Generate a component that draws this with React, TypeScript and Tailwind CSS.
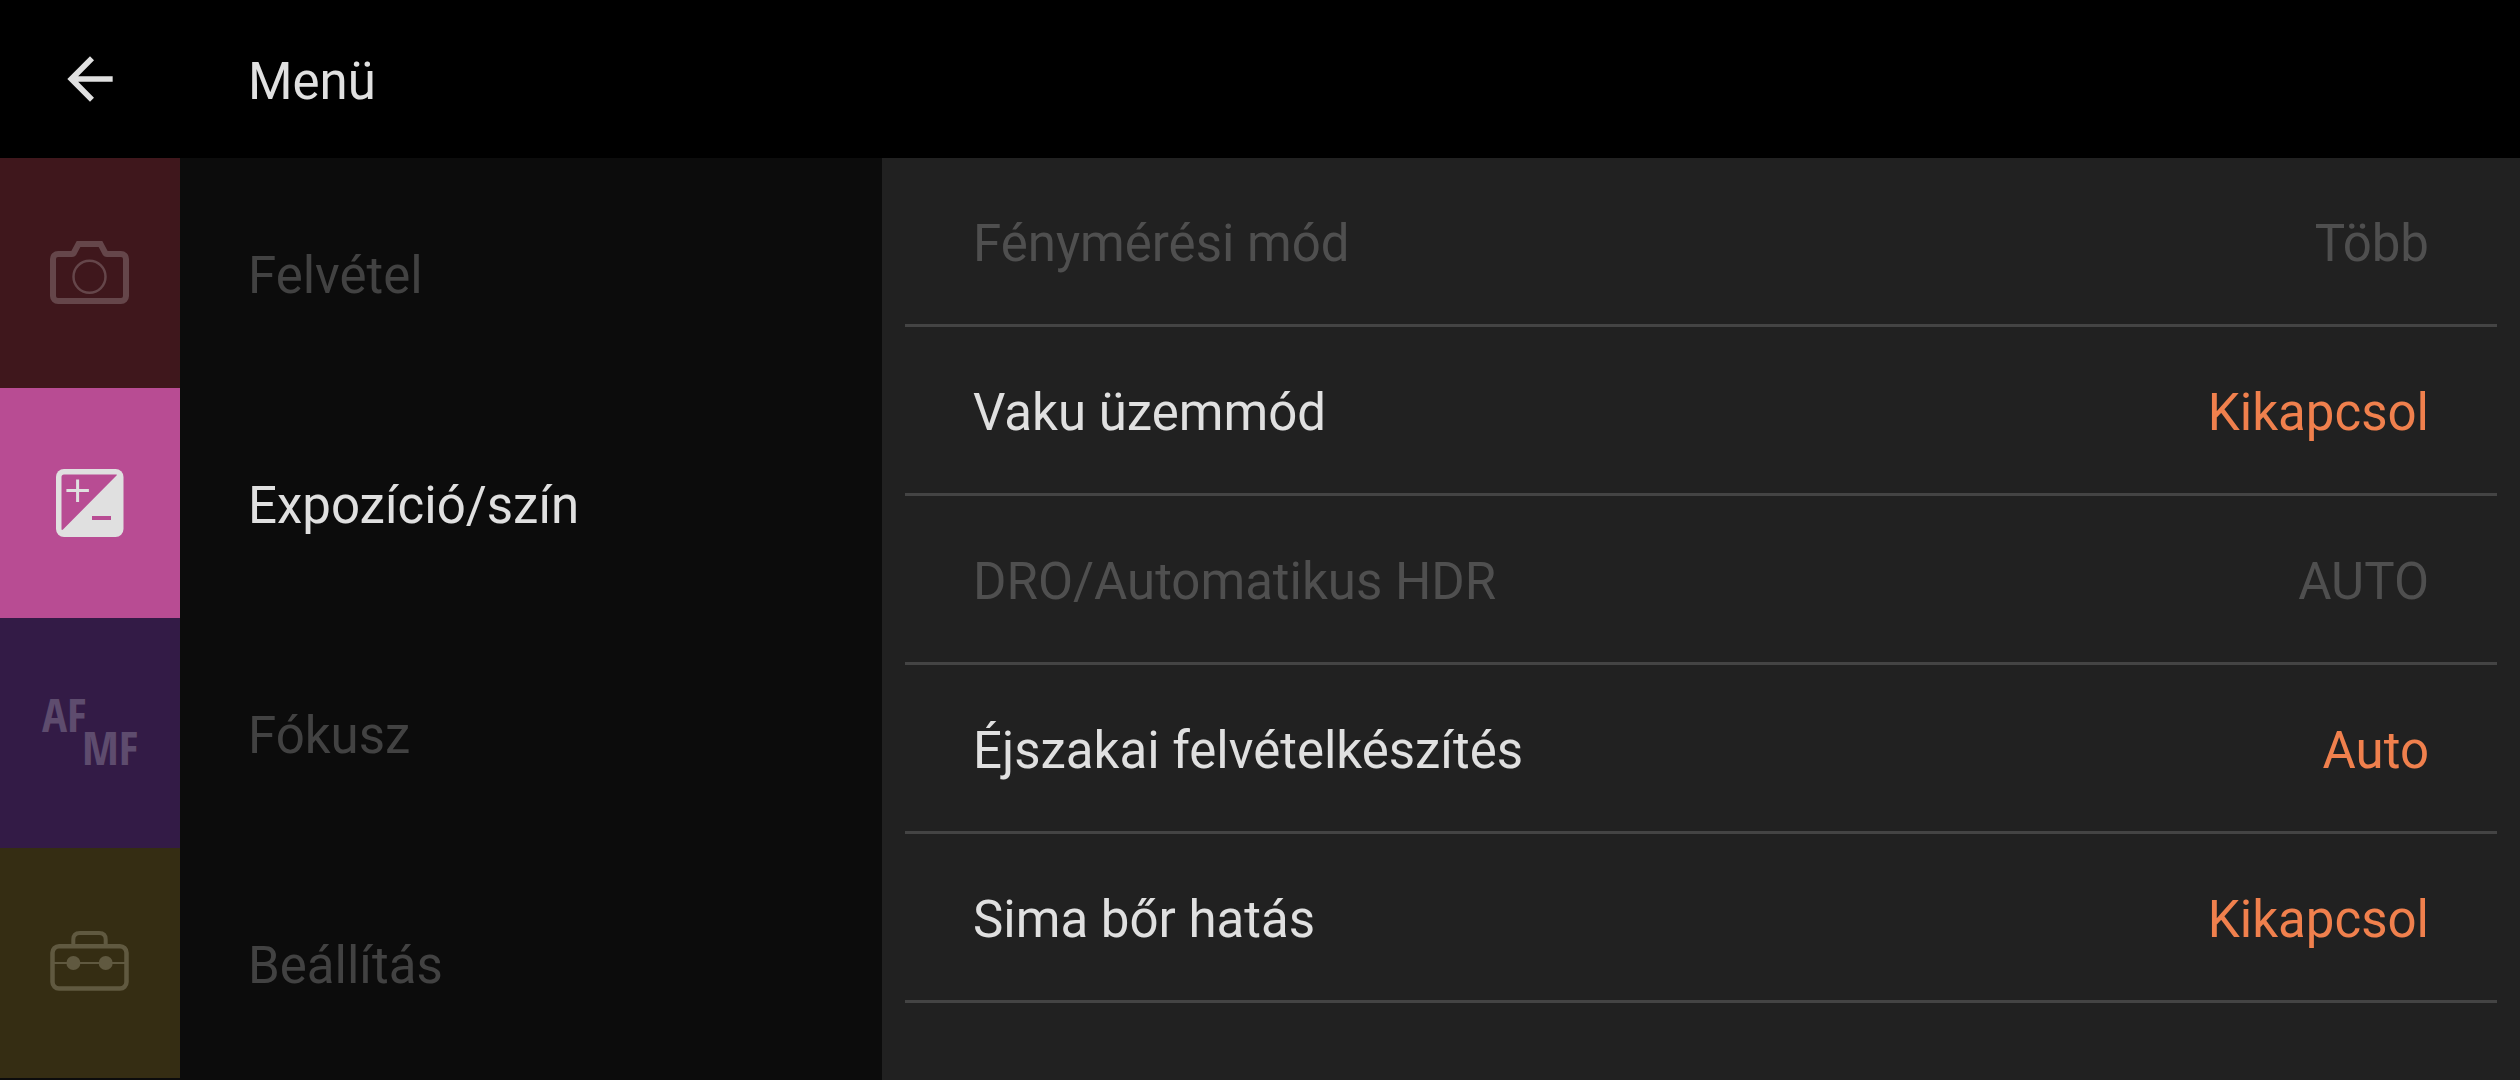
import React from "react";

function CameraIcon() {
  return (
    <svg width="80" height="64" viewBox="0 0 80 64" fill="none" stroke="#65464a" strokeWidth="6" aria-hidden="true">
      <path d="M8 13h14q1.5 0 2-1.5L28.500 3h22L55 11.500q.5 1.500 2 1.500h14a5 5 0 0 1 5 5v37a5 5 0 0 1-5 5H8a5 5 0 0 1-5-5V18a5 5 0 0 1 5-5z" />
      <circle cx="39.5" cy="35.7" r="16" strokeWidth="2.5" />
    </svg>
  );
}

function ExposureIcon() {
  return (
    <svg width="68" height="68" viewBox="0 0 68 68" aria-hidden="true">
      <rect width="67.5" height="68" rx="8" fill="#e0e0e0" />
      <path d="M8 5.5h52.500q.8.300 0 1L7 60.500q-1 .8-1.500 0V8q0-2.500 2.500-2.500z" fill="#b84c93" />
      <path d="M21.600 10.500v22.500M10.400 21.500h22.500" stroke="#e0e0e0" strokeWidth="3" />
      <path d="M36 49h19" stroke="#b84c93" strokeWidth="4" />
    </svg>
  );
}

function FocusIcon() {
  return (
    <span aria-hidden="true" className="flex w-24 flex-col pb-1 font-['Liberation_Sans_Narrow','Open_Sans_Condensed','Roboto_Condensed','Roboto',sans-serif] text-[47px] leading-[33px] font-bold text-[#5e4c6e]">
      <span>AF</span>
      <span className="self-end">MF</span>
    </span>
  );
}

function ToolboxIcon() {
  return (
    <svg width="80" height="64" viewBox="0 0 80 64" fill="none" stroke="#605940" strokeWidth="4.5" aria-hidden="true">
      <rect x="2.5" y="15.2" width="74" height="42.3" rx="6.5" />
      <path d="M23.300 14V8.500q0-6.500 6.500-6.500h19.400q6.500 0 6.500 6.500V14" strokeWidth="4" />
      <path d="M3 32h73" strokeWidth="2" />
      <circle cx="23.4" cy="32" r="7" fill="#605940" stroke="none" />
      <circle cx="55.7" cy="32" r="7" fill="#605940" stroke="none" />
    </svg>
  );
}

const categories = [
  { label: "Felvétel", icon: CameraIcon, color: "bg-[#3f171c]" },
  { label: "Expozíció/szín", icon: ExposureIcon, color: "bg-[#b84c93]", active: true },
  { label: "Fókusz", icon: FocusIcon, color: "bg-[#331b46]" },
  { label: "Beállítás", icon: ToolboxIcon, color: "bg-[#352d13]" },
];

const settings = [
  { label: "Fénymérési mód", value: "Több", disabled: true },
  { label: "Vaku üzemmód", value: "Kikapcsol" },
  { label: "DRO/Automatikus HDR", value: "AUTO", disabled: true },
  { label: "Éjszakai felvételkészítés", value: "Auto" },
  { label: "Sima bőr hatás", value: "Kikapcsol" },
];

export default function App() {
  return (
    <div className="flex h-screen flex-col overflow-hidden bg-black font-[Roboto,sans-serif] text-[51px] leading-[60px] text-[#e0e0e0]">
      <header className="flex h-[158px] shrink-0 items-center">
        <button aria-label="Vissza" className="flex w-[180px] shrink-0 justify-center">
          <svg width="68" height="68" viewBox="0 0 24 24" fill="#e0e0e0" aria-hidden="true">
            <path d="M20 11H7.83l5.59-5.59L12 4l-8 8 8 8 1.41-1.41L7.83 13H20z" />
          </svg>
        </button>
        <h1 className="pt-1.5 pl-[68px]">Menü</h1>
      </header>
      <div className="flex min-h-0 flex-1">
        <nav className="w-[35%] shrink-0 bg-[#0c0c0c]">
          {categories.map(({ label, icon: Icon, color, active }) => (
            <button key={label} aria-current={active ? "page" : undefined} className="flex h-[230px] w-full items-center text-left">
              <span className={`flex h-full w-[180px] shrink-0 items-center justify-center ${color}`}>
                <Icon />
              </span>
              <span className={`pt-1.5 pl-[68px] ${active ? "" : "text-[#424242]"}`}>{label}</span>
            </button>
          ))}
        </nav>
        <main className="min-w-0 flex-1 bg-[#212121] px-[23px]">
          {settings.map(({ label, value, disabled }) => (
            <button key={label} disabled={disabled} className={`flex h-[169px] w-full items-center justify-between border-b-3 border-[#444444] px-[68px] pt-1.5 text-left ${disabled ? "text-[#4f4f4f]" : ""}`}>
              <span>{label}</span>
              <span className={disabled ? "" : "text-[#f0804d]"}>{value}</span>
            </button>
          ))}
        </main>
      </div>
    </div>
  );
}
